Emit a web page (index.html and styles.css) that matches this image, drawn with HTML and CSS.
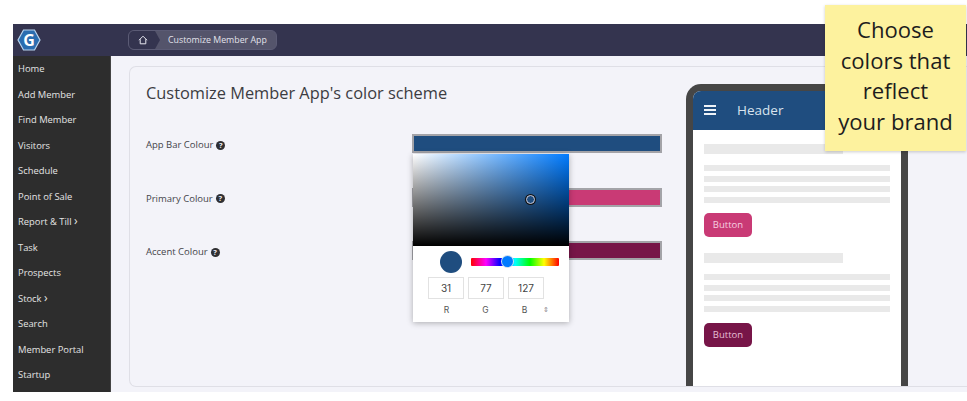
FILE: index.html
```html
<!DOCTYPE html>
<html lang="en">
<head>
<meta charset="utf-8">
<title>Customize Member App</title>
<link rel="stylesheet" href="styles.css">
</head>
<body>
<div class="app">
  <header class="topbar">
    <div class="logo">
      <svg width="24" height="24" viewBox="0 0 24 24"><path d="M6.500 2h11L23 12l-5.500 10h-11L1 12z" fill="#2a6db0" stroke="#b9d4ee" stroke-width="1.200"/><text x="12" y="17.800" text-anchor="middle" class="logo-g">G</text></svg>
    </div>
    <nav class="crumbs">
      <span class="crumb-home">
        <svg width="10" height="10" viewBox="0 0 10 10"><path d="M1 5.200 5 1.200 9 5.200M2.200 4.200V8.800h5.600V4.200" fill="none" stroke="#e6e6ee" stroke-width="1"/></svg>
      </span>
      <span class="crumb-page">Customize Member App</span>
    </nav>
  </header>
  <div class="body">
    <aside class="sidebar">
      <a>Home</a><a>Add Member</a><a>Find Member</a><a>Visitors</a><a>Schedule</a><a>Point of Sale</a><a>Report &amp; Till <span class="chev">›</span></a><a>Task</a><a>Prospects</a><a>Stock <span class="chev">›</span></a><a>Search</a><a>Member Portal</a><a>Startup</a>
    </aside>
    <main class="main">
      <section class="card">
        <div class="settings">
          <h1>Customize Member App's color scheme</h1>
          <div class="row"><label>App Bar Colour <i class="help">?</i></label><div class="swatch bar"></div></div>
          <div class="row"><label>Primary Colour <i class="help">?</i></label><div class="swatch primary"></div></div>
          <div class="row"><label>Accent Colour <i class="help">?</i></label><div class="swatch accent"></div></div>
        </div>
        <div class="phone">
          <div class="phone-head">
            <span class="burger"><b></b><b></b><b></b></span>
            <span>Header</span>
          </div>
          <div class="phone-body">
            <div class="ph-title"></div>
            <div class="ph-line"></div><div class="ph-line"></div><div class="ph-line"></div><div class="ph-line"></div>
            <button class="ph-btn primary">Button</button>
            <div class="ph-title second"></div>
            <div class="ph-line"></div><div class="ph-line"></div><div class="ph-line"></div><div class="ph-line"></div>
            <button class="ph-btn accent">Button</button>
          </div>
        </div>
      </section>
    </main>
  </div>
</div>
<div class="picker">
  <div class="sat"><span class="sat-dot"></span></div>
  <div class="picker-controls">
    <span class="preview"></span>
    <div class="hue"><span class="hue-knob"></span></div>
  </div>
  <div class="rgb-values"><span>31</span><span>77</span><span>127</span></div>
  <div class="rgb-labels"><span>R</span><span>G</span><span>B</span><em>⇕</em></div>
</div>
<div class="note">Choose colors that reflect your brand</div>
</body>
</html>
```
FILE: styles.css
```css
* { box-sizing: border-box; }
html, body { margin: 0; height: 401px; overflow: hidden; background: #fff; }
body { position: relative; font-family: "Open Sans", "Noto Sans", sans-serif; }
.app { margin: 24px 0 0 13px; width: 954px; height: 368px; display: flex; flex-direction: column; }
.topbar { height: 32px; background: #34344f; display: flex; align-items: center; flex: none; }
.logo { width: 115px; padding-left: 4px; display: flex; align-items: center; }
.logo-g { font: 700 16px "Open Sans", sans-serif; fill: #fff; }
.crumbs { display: flex; height: 20px; border: 1px solid #5b5b75; border-radius: 6px; overflow: hidden; font-size: 8.800px; color: #e2e2ea; background: #54546b; align-items: stretch; }
.crumb-home { width: 31px; background: #34344f; display: flex; align-items: center; justify-content: center; padding-right: 4px; clip-path: polygon(0 0, 26px 0, 31px 50%, 26px 100%, 0 100%); }
.crumb-page { padding: 0 9px 0 8px; line-height: 18px; }
.body { flex: 1; display: flex; min-height: 0; }
.sidebar { width: 98px; flex: none; background: #2d2d2d; border-right: 1px solid #444; }
.sidebar a { display: block; height: 25.500px; line-height: 25.500px; padding-left: 5px; font-size: 9.400px; color: #e4e4e4; white-space: nowrap; }
.chev { font-size: 12px; line-height: 1; }
.main { flex: 1; background: #f3f3f9; padding: 10px 0 5px 18px; min-width: 0; }
.card { height: 100%; background: #f3f3f9; border: 1px solid #dfdfe6; border-right: 0; border-radius: 7px 0 0 7px; display: flex; padding: 15px 0 0 16px; position: relative; overflow: hidden; }
.settings { width: 516px; flex: none; }
h1 { margin: 0 0 30px; font-size: 16.380px; line-height: 22px; font-weight: 400; color: #3c3c42; }
.row { height: 53.600px; display: flex; align-items: flex-start; justify-content: space-between; }
.row label { font-size: 9.500px; line-height: 18px; margin-top: 2px; color: #44444a; display: flex; align-items: center; gap: 3px; }
.help { width: 9px; height: 9px; border-radius: 50%; background: #2f2f33; color: #f3f3f9; font: 700 7.500px/9px "Open Sans", sans-serif; text-align: center; }
.swatch { width: 250px; height: 19px; border: 2px solid #a3a3a8; }
.swatch.bar { background: #1f4d7f; }
.swatch.primary { background: #c93a75; }
.swatch.accent { background: #771548; }
.phone { position: absolute; left: 556px; top: 17px; width: 222px; height: 304px; background: #fff; border: 7px solid #464646; border-bottom: 0; border-radius: 15px 15px 0 0; overflow: hidden; }
.phone-head { height: 39px; background: #1f4d7f; color: #d8e3ee; font-size: 13.500px; display: flex; align-items: center; padding: 0 0 2px 11px; gap: 21px; }
.burger { display: flex; flex-direction: column; gap: 2px; width: 12px; }
.burger b { height: 2px; background: #eef3f8; }
.phone-body { padding: 14px 11px 0; display: flex; flex-direction: column; align-items: flex-start; }
.ph-title { width: 139px; height: 10px; background: #e9e9e9; }
.ph-title.second { margin-top: 16px; }
.ph-line { width: 186px; height: 6px; background: #e9e9e9; margin-bottom: 4.500px; }
.ph-title + .ph-line { margin-top: 11px; }
.ph-btn { width: 48px; height: 24px; margin-top: 6px; border: 0; border-radius: 5px; padding: 0 0 2px; font: 9.500px "Open Sans", sans-serif; }
.ph-btn.primary { background: #c93a75; color: #f6cfe0; }
.ph-btn.accent { background: #771548; color: #e6bfd4; margin-top: 7px; }
.picker { position: absolute; left: 413px; top: 154px; width: 156px; height: 168px; background: #fff; box-shadow: 0 1px 6px rgba(0,0,0,.3); display: flex; flex-direction: column; }
.sat { height: 92px; flex: none; position: relative; background: linear-gradient(to top, #000, transparent), linear-gradient(to right, #fff, #007bff); }
.sat-dot { position: absolute; left: 113px; top: 41px; width: 9px; height: 9px; border-radius: 50%; background: #1f4d7f; border: 1px solid #ccd; box-shadow: 0 0 0 1px #111; }
.picker-controls { display: flex; align-items: center; padding: 5px 0 0 27px; height: 27px; flex: none; }
.preview { width: 22px; height: 22px; border-radius: 50%; background: #1f4d7f; flex: none; }
.hue { position: relative; width: 88px; height: 8px; margin-left: 9px; margin-top: -1px; border-radius: 1px; background: linear-gradient(to right, #f00, #f0f 17%, #00f 33%, #0ff 50%, #0f0 67%, #ff0 83%, #f00); }
.hue-knob { position: absolute; left: 31px; top: -2px; width: 11px; height: 11px; border-radius: 50%; background: #007bff; box-shadow: 0 0 0 1px #cde; }
.rgb-values { display: flex; gap: 4px; padding: 4px 0 0 15px; flex: none; }
.rgb-values span { width: 36px; height: 22px; border: 1px solid #e2e2e2; font-size: 10px; line-height: 20px; text-align: center; color: #444; font-family: "Inter", sans-serif; }
.rgb-labels { position: relative; display: flex; padding: 4px 0 0 16px; gap: 4px; font: 8.500px/14px "Inter", sans-serif; color: #555; }
.rgb-labels span { width: 35px; text-align: center; }
.rgb-labels em { position: absolute; left: 130px; top: 4px; font-style: normal; font-size: 7px; color: #888; }
.note { position: absolute; left: 825px; top: 5px; width: 141px; height: 146px; background: #fdf29e; box-shadow: 0 1px 3px rgba(0,0,0,.2); padding: 9px 12px 0; text-align: center; font-size: 22.100px; line-height: 30.500px; color: #1d1d1d; }
```
